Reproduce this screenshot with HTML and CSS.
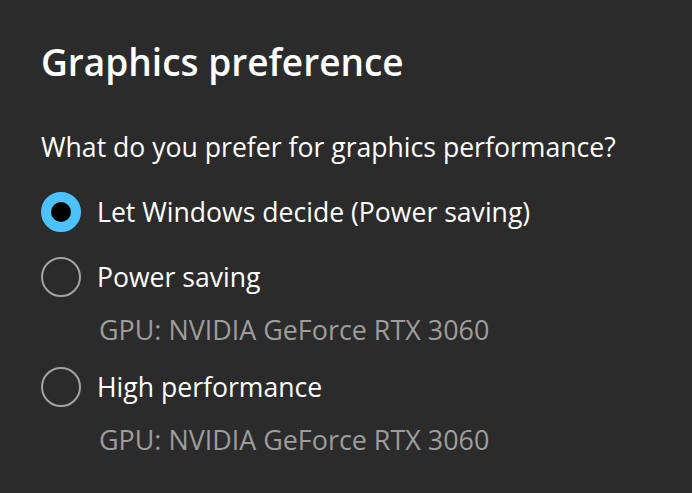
FILE: index.html
```html
<!DOCTYPE html>
<html>
<head>
<meta charset="utf-8">
<link rel="stylesheet" href="styles.css">
</head>
<body>
<main class="panel">
  <h1 class="title">Graphics preference</h1>
  <p class="question">What do you prefer for graphics performance?</p>
  <div class="options">
    <div class="option option-plain">
      <div class="row"><span class="radio checked"></span><span class="label">Let Windows decide (Power saving)</span></div>
    </div>
    <div class="option">
      <div class="row"><span class="radio"></span><span class="label">Power saving</span></div>
      <div class="sub">GPU: NVIDIA GeForce RTX 3060</div>
    </div>
    <div class="option">
      <div class="row"><span class="radio"></span><span class="label">High performance</span></div>
      <div class="sub">GPU: NVIDIA GeForce RTX 3060</div>
    </div>
  </div>
</main>
</body>
</html>
```

FILE: styles.css
```css
html, body {
  margin: 0;
  padding: 0;
  background: #2b2b2b;
  height: 100%;
}
body {
  font-family: "Open Sans", "Noto Sans", sans-serif;
  color: #ffffff;
}
.panel {
  padding: 39px 0 0 41px;
}
.title {
  margin: 0;
  font-size: 37px;
  font-weight: 600;
  line-height: 46px;
}
.question {
  margin: 46px 0 0 0;
  font-size: 26.6px;
  line-height: 32px;
}
.options {
  margin-top: 27px;
  display: flex;
  flex-direction: column;
  gap: 15px;
}
.option-plain {
  padding-bottom: 6px;
}
.row {
  display: flex;
  align-items: center;
  height: 44px;
}
.radio {
  box-sizing: border-box;
  width: 40px;
  height: 40px;
  border-radius: 50%;
  border: 2px solid #a3a3a3;
  margin-right: 16px;
  flex: none;
}
.radio.checked {
  border: 10px solid #4cc2ff;
  background: #000;
}
.label {
  font-size: 26.6px;
}
.sub {
  margin: 11px 0 0 58px;
  font-size: 26.9px;
  color: #9d9d9d;
  line-height: 40px;
}
```
